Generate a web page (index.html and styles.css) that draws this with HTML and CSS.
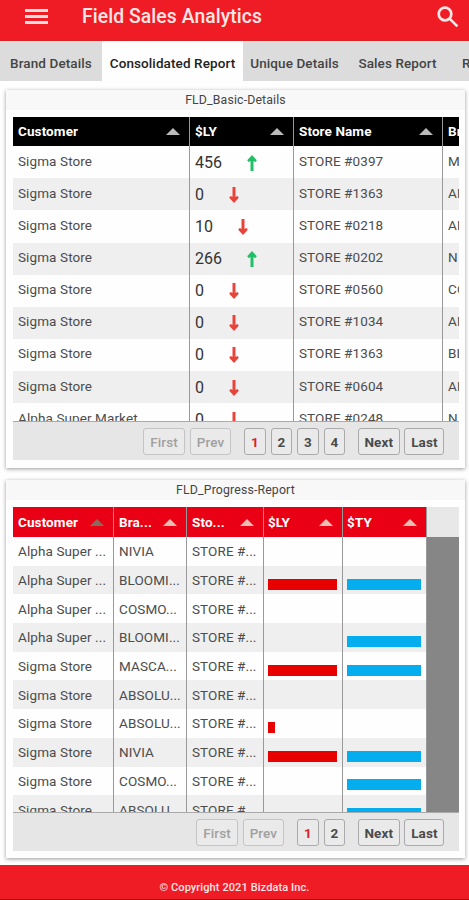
FILE: index.html
```html
<!DOCTYPE html>
<html lang="en">

<head>
  <meta charset="UTF-8">
  <meta name="viewport" content="width=device-width, initial-scale=1.0">
  <title>Field Sales Analytics</title>
  <link rel="stylesheet" href="styles.css">
</head>

<body>
  <svg class="sprite">
    <symbol id="up" viewBox="0 0 10 16">
      <path d="M5 16V3" />
      <path class="tip" d="M5 0l4.8 5.2-1.4 1.8L5 5.6 1.6 7 .2 5.2z" />
    </symbol>
    <symbol id="down" viewBox="0 0 10 16">
      <path d="M5 0v13" />
      <path class="tip" d="M5 16l4.8-5.2-1.4-1.8L5 10.4 1.6 9 .2 10.8z" />
    </symbol>
  </svg>

  <header class="topbar">
    <button class="menu" aria-label="Menu"><i></i><i></i><i></i></button>
    <h1>Field Sales Analytics</h1>
    <svg class="search" viewBox="0 0 22 22">
      <circle cx="8" cy="8" r="6.3" />
      <path d="M12.6 12.6L20.4 20.4" />
    </svg>
  </header>

  <nav class="tabs">
    <a class="tab brand">Brand Details</a>
    <a class="tab consolidated active">Consolidated Report</a>
    <a class="tab unique">Unique Details</a>
    <a class="tab sales">Sales Report</a>
    <a class="tab region">R</a>
  </nav>

  <main>
    <section class="card">
      <h2>FLD_Basic-Details</h2>
      <div class="grid basic">
        <div class="row head">
          <div>Customer<b class="sort"></b></div>
          <div>$LY<b class="sort"></b></div>
          <div>Store Name<b class="sort"></b></div>
          <div>Br</div>
        </div>
        <div class="row">
          <div>Sigma Store</div>
          <div class="num">456<svg class="up"><use href="#up" /></svg></div>
          <div>STORE #0397</div>
          <div>M</div>
        </div>
        <div class="row">
          <div>Sigma Store</div>
          <div class="num">0<svg class="down"><use href="#down" /></svg></div>
          <div>STORE #1363</div>
          <div>AB</div>
        </div>
        <div class="row">
          <div>Sigma Store</div>
          <div class="num">10<svg class="down"><use href="#down" /></svg></div>
          <div>STORE #0218</div>
          <div>AB</div>
        </div>
        <div class="row">
          <div>Sigma Store</div>
          <div class="num">266<svg class="up"><use href="#up" /></svg></div>
          <div>STORE #0202</div>
          <div>N</div>
        </div>
        <div class="row">
          <div>Sigma Store</div>
          <div class="num">0<svg class="down"><use href="#down" /></svg></div>
          <div>STORE #0560</div>
          <div>CO</div>
        </div>
        <div class="row">
          <div>Sigma Store</div>
          <div class="num">0<svg class="down"><use href="#down" /></svg></div>
          <div>STORE #1034</div>
          <div>AB</div>
        </div>
        <div class="row">
          <div>Sigma Store</div>
          <div class="num">0<svg class="down"><use href="#down" /></svg></div>
          <div>STORE #1363</div>
          <div>BL</div>
        </div>
        <div class="row">
          <div>Sigma Store</div>
          <div class="num">0<svg class="down"><use href="#down" /></svg></div>
          <div>STORE #0604</div>
          <div>AB</div>
        </div>
        <div class="row">
          <div>Alpha Super Market</div>
          <div class="num">0<svg class="down"><use href="#down" /></svg></div>
          <div>STORE #0248</div>
          <div>N</div>
        </div>
      </div>
      <div class="pager">
        <button class="word" disabled>First</button>
        <button class="word prev" disabled>Prev</button>
        <button class="current">1</button>
        <button>2</button>
        <button>3</button>
        <button>4</button>
        <button class="word next">Next</button>
        <button class="word last">Last</button>
      </div>
    </section>

    <section class="card">
      <h2>FLD_Progress-Report</h2>
      <div class="grid progress">
        <div class="row head">
          <div>Customer<b class="sort sorted"></b></div>
          <div>Bra...<b class="sort"></b></div>
          <div>Sto...<b class="sort"></b></div>
          <div>$LY<b class="sort"></b></div>
          <div>$TY<b class="sort"></b></div>
        </div>
        <div class="row">
          <div>Alpha Super ...</div>
          <div>NIVIA</div>
          <div>STORE #...</div>
          <div></div>
          <div></div>
        </div>
        <div class="row">
          <div>Alpha Super ...</div>
          <div>BLOOMI...</div>
          <div>STORE #...</div>
          <div><i class="bar ly" style="width: 100%"></i></div>
          <div><i class="bar ty" style="width: 100%"></i></div>
        </div>
        <div class="row">
          <div>Alpha Super ...</div>
          <div>COSMO...</div>
          <div>STORE #...</div>
          <div></div>
          <div></div>
        </div>
        <div class="row">
          <div>Alpha Super ...</div>
          <div>BLOOMI...</div>
          <div>STORE #...</div>
          <div></div>
          <div><i class="bar ty" style="width: 100%"></i></div>
        </div>
        <div class="row">
          <div>Sigma Store</div>
          <div>MASCA...</div>
          <div>STORE #...</div>
          <div><i class="bar ly" style="width: 100%"></i></div>
          <div><i class="bar ty" style="width: 100%"></i></div>
        </div>
        <div class="row">
          <div>Sigma Store</div>
          <div>ABSOLU...</div>
          <div>STORE #...</div>
          <div></div>
          <div></div>
        </div>
        <div class="row">
          <div>Sigma Store</div>
          <div>ABSOLU...</div>
          <div>STORE #...</div>
          <div><i class="bar ly" style="width: 10%"></i></div>
          <div></div>
        </div>
        <div class="row">
          <div>Sigma Store</div>
          <div>NIVIA</div>
          <div>STORE #...</div>
          <div><i class="bar ly" style="width: 100%"></i></div>
          <div><i class="bar ty" style="width: 100%"></i></div>
        </div>
        <div class="row">
          <div>Sigma Store</div>
          <div>COSMO...</div>
          <div>STORE #...</div>
          <div></div>
          <div><i class="bar ty" style="width: 100%"></i></div>
        </div>
        <div class="row">
          <div>Sigma Store</div>
          <div>ABSOLU...</div>
          <div>STORE #...</div>
          <div></div>
          <div><i class="bar ty" style="width: 100%"></i></div>
        </div>
      </div>
      <div class="pager">
        <button class="word" disabled>First</button>
        <button class="word prev" disabled>Prev</button>
        <button class="current">1</button>
        <button>2</button>
        <button class="word next">Next</button>
        <button class="word last">Last</button>
      </div>
    </section>
  </main>

  <footer>© Copyright 2021 Bizdata Inc.</footer>
</body>

</html>
```
FILE: styles.css
```css
* {
  padding: 0;
  border: 0;
  margin: 0;
  box-sizing: border-box;
}

body {
  font-family: Roboto, "Liberation Sans", sans-serif;
  font-size: 13.5px;
  color: #4c4c4c;
  width: 469px;
  height: 900px;
  overflow: hidden;
  background-color: #fefefe;
  display: flex;
  flex-direction: column;
}

.sprite {
  display: none;
}

.topbar {
  height: 41px;
  flex: none;
  display: flex;
  align-items: center;
  padding: 0 10px 7px 25px;
  background-color: #ef1c25;
  border-bottom: 1px solid #d8232a;
}

.menu {
  display: flex;
  flex-direction: column;
  gap: 3px;
  width: 23px;
  background: none;
}

.menu i {
  height: 3px;
  background-color: #ffdcdc;
}

h1 {
  flex: 1;
  margin-left: 34px;
  font-size: 19.3px;
  font-weight: 500;
  letter-spacing: 0.1px;
  color: #ffe6e6;
}

.search {
  width: 22px;
  height: 22px;
  fill: none;
  stroke: #ffe6e6;
  stroke-width: 2.7;
}

.tabs {
  display: flex;
  flex: none;
  height: 40px;
  overflow: hidden;
  background-color: #dcdcdc;
}

.tab {
  flex: none;
  line-height: 44px;
  text-align: center;
  font-weight: 500;
  letter-spacing: 0.1px;
  color: #444;
}

.active {
  background-color: #fefefe;
  color: #222;
}

.brand {
  width: 102px;
}

.consolidated {
  width: 141px;
}

.unique,
.sales {
  width: 103px;
}

.region {
  padding-left: 13px;
}

main {
  padding: 9px 4px 0 6px;
  display: flex;
  flex-direction: column;
  gap: 12px;
  height: 784px;
  flex: none;
}

.card {
  height: 378px;
  padding: 0 7px;
  background-color: #fefefe;
  box-shadow: 0 1px 4px rgba(0, 0, 0, 0.4);
}

h2 {
  height: 20px;
  margin: 0 -7px 7px;
  line-height: 21px;
  text-align: center;
  font-size: 12.3px;
  font-weight: 400;
  letter-spacing: 0.15px;
  color: #444;
  background-color: #f8f8f8;
}

.grid {
  width: 446px;
  height: 305px;
  overflow: hidden;
  border-bottom: 1px solid #aaa;
}

.row {
  display: grid;
  background-color: #fefefe;
}

.row:nth-child(odd) {
  background-color: #efefef;
}

.row > div {
  display: flex;
  align-items: center;
  padding: 0 5px 3px;
  white-space: nowrap;
  letter-spacing: 0.1px;
  border-right: 1px solid #999;
  overflow: hidden;
}

.row.head > div {
  padding-bottom: 1px;
  font-weight: 700;
  color: #fff;
}

.basic .row {
  grid-template-columns: 177px 104px 149px 16px;
  height: 32.1px;
}

.basic .row > div:last-child {
  padding-right: 0;
  border-right: 0;
}

.basic .row.head {
  height: 29.3px;
  background-color: #000;
}

.basic .row > .num {
  padding-bottom: 0;
  font-size: 16px;
  letter-spacing: 0;
  color: #333;
}

.num svg {
  width: 10px;
  height: 16px;
  margin-left: 25px;
  margin-top: 1px;
  stroke-width: 3;
}

.tip {
  stroke: none;
}

.up {
  fill: #22bf66;
  stroke: #22bf66;
}

.down {
  fill: #e8443a;
  stroke: #e8443a;
}

.sort {
  margin-left: auto;
  margin-right: 4px;
  border: 7px solid transparent;
  border-top: 0;
  border-bottom: 7px solid #bbb;
}

.progress {
  height: 306px;
  background-color: #868686;
}

.progress .row {
  grid-template-columns: 101px 73px 77px 79px 84px;
  width: 414px;
  height: 28.7px;
}

.progress .row > div {
  padding-left: 4px;
  padding-right: 5px;
  padding-bottom: 0;
}

.progress .row > div:nth-child(-n+3) {
  padding-left: 5px;
  padding-right: 0;
}

.progress .row.head {
  width: 446px;
  height: 30px;
  background-color: #e8e8e8;
}

.progress .head > div {
  background-color: #ea0014;
}

.progress .head .sort {
  margin-right: 4px;
  border-bottom-color: #eebcb0;
}

.progress .head > div:nth-child(-n+3) .sort {
  margin-right: 9px;
}

.progress .head .sorted {
  border-bottom-color: #8a6a5c;
}

.bar {
  height: 11px;
  margin-top: 8px;
}

.ly {
  background-color: #e80000;
}

.ty {
  background-color: #04aeee;
}

.pager {
  display: flex;
  align-items: center;
  justify-content: flex-end;
  gap: 4.9px;
  width: 446px;
  height: 38px;
  padding: 1px 14.6px 0 0;
  background-color: #e6e6e6;
}

button {
  font-family: inherit;
}

.pager button {
  width: 21.6px;
  height: 27px;
  font-size: 13.5px;
  font-weight: 700;
  letter-spacing: 0.1px;
  color: #4a4a4a;
  border: 1px solid #aaa;
  border-radius: 3px;
  background-color: #eaeaea;
}

.pager .word {
  width: 41.5px;
}

.pager .last {
  width: 40px;
}

.pager .prev {
  margin-right: 8px;
}

.pager .next {
  margin-left: 8px;
}

.pager button:disabled {
  font-weight: 500;
  color: #a0a0a0;
  border-color: #c4c4c4;
}

.pager .current {
  color: #d8202a;
}

footer {
  flex: none;
  height: 35px;
  line-height: 45px;
  text-align: center;
  font-size: 11px;
  font-weight: 500;
  letter-spacing: 0.1px;
  color: #ffe6e6;
  background-color: #ef1c25;
  border-bottom: 1px solid #a01018;
}
```
